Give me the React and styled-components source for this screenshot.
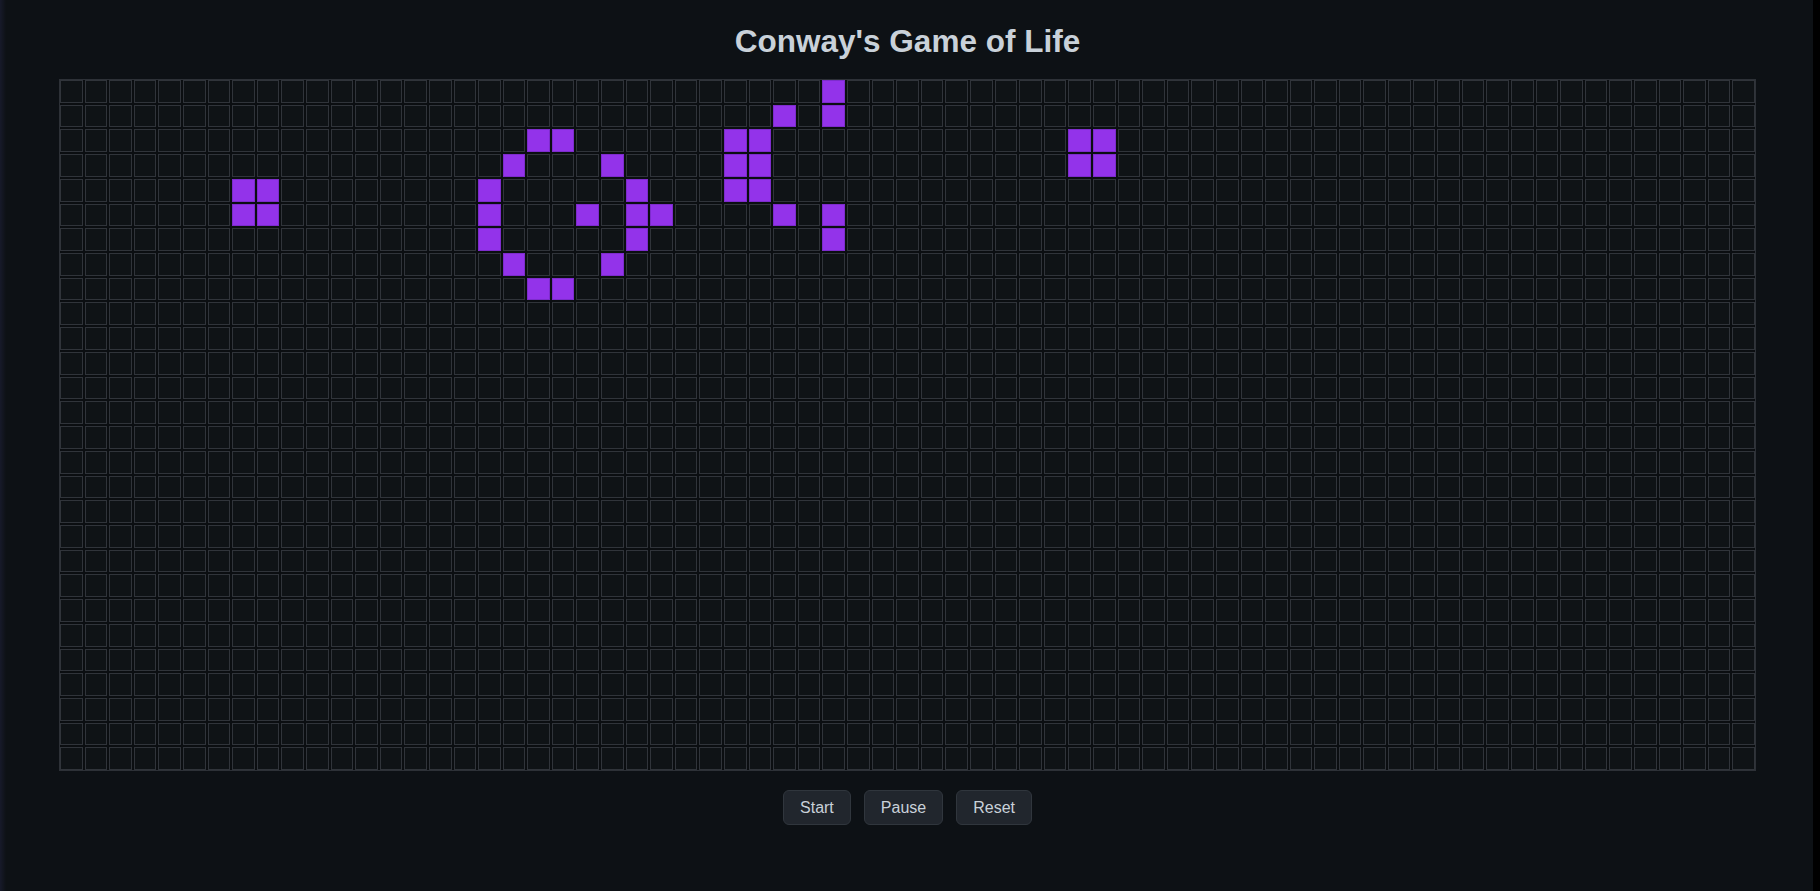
import React from "react";
import styled, { createGlobalStyle } from "styled-components";

const COLS = 69;
const ROWS = 28;

const ALIVE = [
  [0, 31],
  [1, 29], [1, 31],
  [2, 19], [2, 20], [2, 27], [2, 28], [2, 41], [2, 42],
  [3, 18], [3, 22], [3, 27], [3, 28], [3, 41], [3, 42],
  [4, 7], [4, 8], [4, 17], [4, 23], [4, 27], [4, 28],
  [5, 7], [5, 8], [5, 17], [5, 21], [5, 23], [5, 24], [5, 29], [5, 31],
  [6, 17], [6, 23], [6, 31],
  [7, 18], [7, 22],
  [8, 19], [8, 20],
];
const aliveSet = new Set(ALIVE.map(([r, c]) => `${r}-${c}`));

const GlobalStyle = createGlobalStyle`
  html, body {
    margin: 0;
    padding: 0;
    background: #0d1115;
  }
  body {
    font-family: "Liberation Sans", Arial, sans-serif;
    color: #c9d1d9;
  }
`;

const Page = styled.div`
  display: flex;
  min-height: 891px;
  background: #0d1115;
`;

const LeftEdge = styled.div`
  width: 6px;
  flex: none;
  background: linear-gradient(to right, #171a2a, #0d1115);
`;

const RightEdge = styled.div`
  width: 7px;
  flex: none;
  background: #000;
`;

const Main = styled.main`
  flex: 1;
  padding: 0 0 0 53px;
`;

const Column = styled.div`
  width: 1697px;
  display: flex;
  flex-direction: column;
  align-items: center;
`;

const Title = styled.h1`
  margin: 23px 0 20px;
  font-size: 31.5px;
  line-height: 36px;
  font-weight: 700;
  color: #c9d1d9;
  text-align: center;
`;

const Board = styled.div`
  box-sizing: border-box;
  width: 1697px;
  display: grid;
  grid-template-columns: repeat(${(p) => p.$cols}, 1fr);
  grid-auto-rows: 22.72px;
  gap: 2px;
  border: 1px solid #2d3137;
  background: #0b0e11;
`;

const Cell = styled.div`
  box-sizing: border-box;
  border: 1px solid ${(p) => (p.$alive ? "#7d2ccc" : "#30343a")};
  background: ${(p) => (p.$alive ? "#9333ea" : "#0f1316")};
`;

const Controls = styled.div`
  display: flex;
  gap: 13px;
  margin-top: 19px;
`;

const Button = styled.button`
  box-sizing: border-box;
  height: 35px;
  padding: 0 16px;
  border: 1px solid #30363d;
  border-radius: 6px;
  background: #21262d;
  color: #c9d1d9;
  font-family: "Liberation Sans", Arial, sans-serif;
  font-size: 16px;
  cursor: pointer;
`;

export default function App() {
  const cells = [];
  for (let r = 0; r < ROWS; r++) {
    for (let c = 0; c < COLS; c++) {
      cells.push(<Cell key={`${r}-${c}`} $alive={aliveSet.has(`${r}-${c}`)} />);
    }
  }
  return (
    <>
      <GlobalStyle />
      <Page>
        <LeftEdge />
        <Main>
          <Column>
            <Title>Conway's Game of Life</Title>
            <Board $cols={COLS}>{cells}</Board>
            <Controls>
              <Button>Start</Button>
              <Button>Pause</Button>
              <Button>Reset</Button>
            </Controls>
          </Column>
        </Main>
        <RightEdge />
      </Page>
    </>
  );
}
